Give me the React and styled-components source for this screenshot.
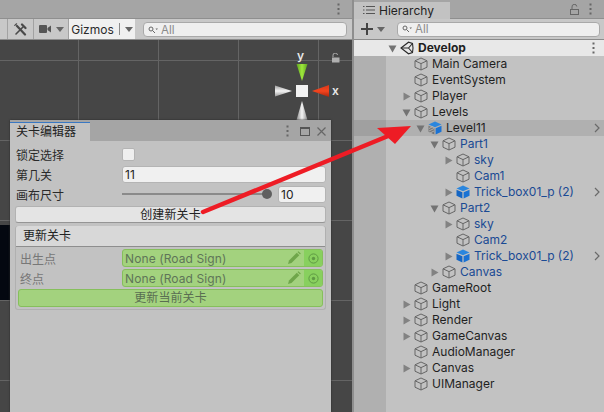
import React from 'react';
import styled, { createGlobalStyle } from 'styled-components';

const GlobalStyle = createGlobalStyle`
  html, body { margin: 0; padding: 0; background: #c2c2c2; }
  * { box-sizing: border-box; }
`;

const uiFont = `Inter, "Noto Sans CJK SC", "Liberation Sans", sans-serif`;

const Page = styled.div`
  position: relative;
  width: 604px;
  height: 412px;
  overflow: hidden;
  display: flex;
  font-family: ${uiFont};
  font-size: 12px;
  color: #1a1a1a;
`;

const ScenePanel = styled.div`
  width: 352px;
  display: flex;
  flex-direction: column;
`;

const TabBar = styled.div`
  height: 19px;
  background: #a5a5a5;
  border-bottom: 1px solid #8f8f8f;
  display: flex;
  align-items: center;
  justify-content: flex-end;
  padding-right: 12px;
`;

const Toolbar = styled.div`
  height: 21px;
  background: #c8c8c8;
  border-bottom: 1px solid #8c8c8c;
  display: flex;
  align-items: stretch;
  padding-left: 7px;
`;

const ToolButton = styled.div`
  width: ${p => p.$w}px;
  display: flex;
  align-items: center;
  justify-content: center;
  gap: 5px;
  border-left: 1px solid #a2a2a2;
  background: ${p => p.$light ? '#f0f0f0' : '#c8c8c8'};
  color: #2a2a2a;
`;

const Divider = styled.span`
  width: 1px;
  height: 12px;
  background: #8a8a8a;
`;

const SearchBox = styled.div`
  height: 15px;
  width: ${p => p.$w}px;
  margin: ${p => p.$margin};
  background: #efefef;
  border: 1px solid #a9a9a9;
  border-radius: 4px;
  display: flex;
  align-items: center;
  gap: 3px;
  padding-left: 4px;
  color: #8a8a8a;
  font-size: 11.5px;
`;

const Scene = styled.div`
  position: relative;
  flex: 1;
  background-color: #464646;
  background-image:
    linear-gradient(#646464 1px, transparent 1px),
    linear-gradient(90deg, #646464 1px, transparent 1px);
  background-size: 80px 80px;
  background-position: 78px 20px;
`;

const BlackImage = styled.div`
  position: absolute;
  left: 0;
  top: 185px;
  width: 12px;
  height: 75px;
  background: #040810;
`;

const GizmoWrap = styled.svg`
  position: absolute;
  left: 268px;
  top: 8px;
`;

const FloatingWindow = styled.div`
  position: absolute;
  left: 10px;
  top: 80px;
  width: 321px;
  height: 292px;
  background: #c2c2c2;
  display: flex;
  flex-direction: column;
  box-shadow: 0 0 2px #2a2a2a;
`;

const WindowBar = styled.div`
  height: 21px;
  background: #a5a5a5;
  display: flex;
  align-items: flex-end;
  justify-content: space-between;
  padding-right: 5px;
`;

const WindowTab = styled.div`
  width: 80px;
  height: 19px;
  background: #c2c2c2;
  border-top: 1px solid #3a78c2;
  padding-left: 6px;
  line-height: 18px;
  color: #222;
`;

const WindowControls = styled.div`
  display: flex;
  align-items: center;
  gap: 7px;
  height: 20px;
`;

const WindowMenu = styled.span`
  display: flex;
  margin-right: 4px;
`;

const WindowBody = styled.div`
  padding: 3px 5px 0;
  display: flex;
  flex-direction: column;
`;

const FieldRow = styled.div`
  display: flex;
  align-items: center;
  height: 20px;
`;

const FieldLabel = styled.div`
  width: ${p => p.$w || 107}px;
  padding-left: ${p => p.$indent ?? 1}px;
  color: ${p => p.$muted ? '#777' : '#2a2a2a'};
`;

const CheckBox = styled.div`
  width: 13px;
  height: 13px;
  background: #efefef;
  border: 1px solid #b4b4b4;
  border-radius: 2px;
`;

const TextInput = styled.div`
  height: 17px;
  width: ${p => p.$w}px;
  background: #f0f0f0;
  border: 1px solid #b4b4b4;
  border-radius: 3px;
  padding-left: 2px;
  line-height: 16px;
  color: #222;
`;

const SliderTrack = styled.div`
  position: relative;
  width: 146px;
  height: 2px;
  margin-right: 10px;
  background: #8a8a8a;
`;

const SliderThumb = styled.div`
  position: absolute;
  right: -4px;
  top: -4px;
  width: 10px;
  height: 10px;
  border-radius: 50%;
  background: #5f5f5f;
`;

const CreateButton = styled.div`
  height: 17px;
  margin-top: 2px;
  background: #e4e4e4;
  border: 1px solid #b2b2b2;
  border-bottom-color: #959595;
  border-radius: 3px;
  text-align: center;
  line-height: 15px;
  letter-spacing: 0.1px;
  color: #222;
`;

const Section = styled.div`
  margin-top: 3px;
  height: 84px;
  border: 1px solid #b0b0b0;
  border-top: none;
  border-radius: 3px;
`;

const SectionHeader = styled.div`
  height: 21px;
  background: #d8d8d8;
  border-bottom: 1px solid #8e8e8e;
  border-radius: 3px 3px 0 0;
  padding-left: 7px;
  line-height: 20px;
  color: #222;
`;

const SectionBody = styled.div`
  padding: 1px 2px 0 2px;
`;

const GreenField = styled.div`
  flex: 1;
  height: 18px;
  background: #a3d27e;
  border: 1px solid #86bf5c;
  border-radius: 3px;
  display: flex;
  align-items: center;
  padding-left: 2px;
  color: #5f7558;
  letter-spacing: 0.1px;
  overflow: hidden;
`;

const FieldText = styled.span`
  flex: 1;
`;

const PickerCell = styled.div`
  width: 18px;
  height: 100%;
  margin-left: 3px;
  background: #88d05e;
  display: flex;
  align-items: center;
  justify-content: center;
`;

const GreenButton = styled.div`
  height: 18px;
  margin-top: 1px;
  background: #a3d27e;
  border: 1px solid #86bf5c;
  border-radius: 3px;
  text-align: center;
  line-height: 16px;
  color: #5a6e52;
  letter-spacing: 0.1px;
`;

const HierarchyPanel = styled.div`
  width: 252px;
  display: flex;
  flex-direction: column;
  border-left: 2px solid #8e8e8e;
`;

const HierarchyBar = styled(TabBar)`
  justify-content: space-between;
  padding-right: 12px;
`;

const HierarchyTab = styled.div`
  width: 96px;
  height: 17px;
  margin-top: 2px;
  background: #c2c2c2;
  display: flex;
  align-items: center;
  gap: 4px;
  padding-left: 9px;
  color: #222;
`;

const BarIcons = styled.div`
  display: flex;
  align-items: center;
  gap: 10px;
`;

const HierarchyToolbar = styled.div`
  height: 21px;
  background: #c8c8c8;
  border-bottom: 1px solid #8c8c8c;
  display: flex;
  align-items: center;
  padding-left: 7px;
`;

const AddButton = styled.div`
  width: 36px;
  display: flex;
  align-items: center;
  gap: 4px;
`;

const Tree = styled.div`
  flex: 1;
  background: linear-gradient(90deg, #b0b0b0 32px, #c2c2c2 32px);
`;

const Row = styled.div`
  position: relative;
  height: 16px;
  display: flex;
  align-items: center;
  padding-left: ${p => 31 + p.$depth * 14}px;
  padding-right: 4px;
  background: ${p => p.$bg || 'transparent'};
  color: ${p => p.$blue ? '#1a4a94' : '#1f1f1f'};
  font-weight: ${p => p.$bold ? 700 : 400};
`;

const RowLabel = styled.span`
  padding-bottom: 2px;
`;

const SelectedStrip = styled.div`
  position: absolute;
  left: 0;
  top: 0;
  width: 32px;
  height: 16px;
  background: #a0a0a0;
`;

const Expander = styled.span`
  position: relative;
  width: 14px;
  height: 16px;
  display: flex;
  align-items: center;
  justify-content: center;
`;

const TreeIcon = styled.span`
  width: 16px;
  height: 16px;
  display: flex;
  align-items: center;
  justify-content: center;
  margin-right: 3px;
`;

const RowEnd = styled.span`
  margin-left: auto;
  margin-right: ${p => p.$inset || 0}px;
  display: flex;
  align-items: center;
`;

const ArrowOverlay = styled.svg`
  position: absolute;
  left: 0;
  top: 0;
  pointer-events: none;
`;

const GizmoLabel = styled.span`
  position: absolute;
  left: ${p => p.$x}px;
  top: ${p => p.$y}px;
  color: #e8e8e8;
  font-size: 12px;
  font-weight: 600;
  font-family: Inter, sans-serif;
`;

const SceneLock = styled.span`
  position: absolute;
  left: 331px;
  top: 13px;
  line-height: 0;
`;

const Dots = ({ color = '#666' }) => (
  <svg width="3" height="12" viewBox="0 0 3 12">
    <rect x="0.5" y="0.5" width="2" height="2" fill={color} />
    <rect x="0.5" y="5" width="2" height="2" fill={color} />
    <rect x="0.5" y="9.5" width="2" height="2" fill={color} />
  </svg>
);

const Triangle = ({ open }) => (
  <svg width="9" height="9" viewBox="0 0 9 9">
    {open
      ? <path d="M0.5 1.5H8.5L4.5 8.5Z" fill="#737373" />
      : <path d="M1.5 0.5V8.5L8.5 4.5Z" fill="#828282" />}
  </svg>
);

const CubeOutline = () => (
  <svg width="14" height="14" viewBox="0 0 14 14" fill="none" stroke="#666" strokeWidth="1" strokeLinejoin="round">
    <path d="M7 1L13 3.8V10.2L7 13L1 10.2V3.8Z" />
    <path d="M1 3.8L7 6.6L13 3.8M7 6.6V13" />
  </svg>
);

const CubePrefab = () => (
  <svg width="14" height="14" viewBox="0 0 14 14">
    <path d="M7 0.5L13.5 3.5L7 6.3L0.5 3.5Z" fill="#2a86de" />
    <path d="M0.5 4.7L6.4 7.3V13.5L0.5 10.7Z" fill="#1566c4" />
    <path d="M13.5 4.7L7.6 7.3V13.5L13.5 10.7Z" fill="#1a72d4" />
  </svg>
);

const CubePrefabHatched = () => (
  <svg width="14" height="14" viewBox="0 0 14 14">
    <path d="M7 0.5L13.5 3.5L7 6.3L0.5 3.5Z" fill="#2a86de" />
    <path d="M0.5 4.7L6.4 7.3V13.5L0.5 10.7Z" fill="#777" />
    <path d="M1 7.5L5 5.5M1 10L6 7.5M2 12L6 10" stroke="#b0b0b0" strokeWidth="1" />
    <path d="M13.5 4.7L7.6 7.3V13.5L13.5 10.7Z" fill="#1a72d4" />
  </svg>
);

const UnityLogo = () => (
  <svg width="14" height="14" viewBox="0 0 14 14" fill="none" stroke="#2a2a2a" strokeWidth="1.1">
    <path d="M1 7L8.5 1.2L12.5 2.5L13 7L12.5 11.5L8.5 12.8Z" />
    <path d="M1 7H8.5L12.5 2.5M8.5 7L12.5 11.5" />
  </svg>
);

const SearchGlyph = () => (
  <svg width="10" height="8" viewBox="0 0 10 8" fill="none" stroke="#666">
    <circle cx="3" cy="3" r="2" />
    <path d="M4.5 4.5L7 7" />
    <path d="M7.5 2.5H10L8.7 4Z" fill="#666" stroke="none" />
  </svg>
);

const Caret = () => (
  <svg width="8" height="5" viewBox="0 0 8 5"><path d="M0 0H8L4 5Z" fill="#666" /></svg>
);

const LockIcon = ({ color = '#666' }) => (
  <svg width="9" height="10" viewBox="0 0 9 10">
    <path d="M2 4V2.5A2 2 0 0 1 6.5 2" fill="none" stroke={color} strokeWidth="1" />
    <rect x="1" y="4.5" width="7.5" height="5" fill={color} />
  </svg>
);

const LockOutline = () => (
  <svg width="9" height="11" viewBox="0 0 9 11" fill="none" stroke="#666">
    <path d="M2 5V3A2.3 2.3 0 0 1 6.8 2.5" />
    <rect x="0.5" y="5.5" width="8" height="5" />
  </svg>
);

const ToolsIcon = () => (
  <svg width="13" height="13" viewBox="0 0 13 13" fill="none" stroke="#4a4a4a" strokeLinecap="round">
    <path d="M3 3L11 11.5" strokeWidth="2.2" />
    <path d="M9 4L2 11" strokeWidth="1.6" />
    <path d="M8 1.5L11.5 5" strokeWidth="2.2" />
    <path d="M0.8 2.4L2.6 0.8" strokeWidth="1.2" />
  </svg>
);

const CameraIcon = () => (
  <svg width="12" height="8" viewBox="0 0 12 8">
    <rect x="0" y="0" width="8" height="8" rx="1" fill="#555" />
    <path d="M8.5 3L12 0.5V7.5L8.5 5Z" fill="#555" />
  </svg>
);

const MaximizeIcon = () => (
  <svg width="10" height="9" viewBox="0 0 10 9" fill="none" stroke="#555">
    <rect x="0.5" y="0.5" width="9" height="8" />
    <path d="M0.5 1.5H9.5" />
  </svg>
);

const CloseIcon = () => (
  <svg width="9" height="9" viewBox="0 0 9 9" fill="none" stroke="#666" strokeWidth="1.2">
    <path d="M0.5 0.5L8.5 8.5M8.5 0.5L0.5 8.5" />
  </svg>
);

const ListIcon = () => (
  <svg width="12" height="10" viewBox="0 0 12 10" fill="none" stroke="#555">
    <path d="M3 1.5H12M3 5H12M3 8.5H12" />
    <path d="M0 1.5H1.5M0 5H1.5M0 8.5H1.5" />
  </svg>
);

const PlusIcon = () => (
  <svg width="12" height="12" viewBox="0 0 12 12">
    <path d="M5 0H7V5H12V7H7V12H5V7H0V5H5Z" fill="#444" />
  </svg>
);

const Pencil = () => (
  <svg width="14" height="14" viewBox="0 0 14 14">
    <path d="M1 13L2 9.5L9.8 1.7L12.3 4.2L4.5 12Z" fill="#6fa64a" />
    <path d="M10.5 1L11.5 0.2L13.8 2.5L13 3.5Z" fill="#6fa64a" />
  </svg>
);

const PickerIcon = () => (
  <svg width="11" height="11" viewBox="0 0 11 11" fill="none" stroke="#5f9a44">
    <circle cx="5.5" cy="5.5" r="4.6" />
    <circle cx="5.5" cy="5.5" r="1.7" fill="#5f9a44" stroke="none" />
  </svg>
);

const Chevron = () => (
  <svg width="6" height="10" viewBox="0 0 6 10" fill="none" stroke="#6a6a6a" strokeWidth="1.2">
    <path d="M1 1L5 5L1 9" />
  </svg>
);

const Gizmo = () => (
  <GizmoWrap width="80" height="72" viewBox="0 0 80 72">
    <defs>
      <linearGradient id="gz-green" x1="0" x2="1" y1="0" y2="0">
        <stop offset="0" stopColor="#5fa31f" />
        <stop offset="0.5" stopColor="#9fe83c" />
        <stop offset="1" stopColor="#5fa31f" />
      </linearGradient>
      <linearGradient id="gz-red" x1="0" x2="0" y1="0" y2="1">
        <stop offset="0" stopColor="#d8381a" />
        <stop offset="0.5" stopColor="#f4451e" />
        <stop offset="1" stopColor="#a8260f" />
      </linearGradient>
      <linearGradient id="gz-white" x1="0" x2="0" y1="0" y2="1">
        <stop offset="0" stopColor="#a0a0a0" />
        <stop offset="0.5" stopColor="#f4f4f4" />
        <stop offset="1" stopColor="#9a9a9a" />
      </linearGradient>
      <linearGradient id="gz-white-v" x1="0" x2="1" y1="0" y2="0">
        <stop offset="0" stopColor="#8e8e8e" />
        <stop offset="0.5" stopColor="#f4f4f4" />
        <stop offset="1" stopColor="#8e8e8e" />
      </linearGradient>
    </defs>
    <path d="M28.5 16H39.5L34 33Z" fill="url(#gz-green)" />
    <path d="M44 43L61 37V49Z" fill="url(#gz-red)" />
    <path d="M7 37.5V48.5L24 43Z" fill="url(#gz-white)" />
    <path d="M28.5 72H39.5L34 53Z" fill="url(#gz-white-v)" />
    <rect x="28" y="37" width="12" height="12" fill="#f2f2f2" />
  </GizmoWrap>
);

const treeRows = [
  { label: 'Develop', depth: 0, open: true, icon: 'unity', bold: true, bg: '#e8e8e8', dots: true },
  { label: 'Main Camera', depth: 1 },
  { label: 'EventSystem', depth: 1 },
  { label: 'Player', depth: 1, closed: true },
  { label: 'Levels', depth: 1, open: true },
  { label: 'Level11', depth: 2, open: true, icon: 'hatched', bg: '#b0b0b0', selected: true, chevron: true },
  { label: 'Part1', depth: 3, open: true, blue: true },
  { label: 'sky', depth: 4, closed: true, blue: true },
  { label: 'Cam1', depth: 4, blue: true },
  { label: 'Trick_box01_p (2)', depth: 4, closed: true, blue: true, icon: 'prefab', chevron: true },
  { label: 'Part2', depth: 3, open: true, blue: true },
  { label: 'sky', depth: 4, closed: true, blue: true },
  { label: 'Cam2', depth: 4, blue: true },
  { label: 'Trick_box01_p (2)', depth: 4, closed: true, blue: true, icon: 'prefab', chevron: true },
  { label: 'Canvas', depth: 3, closed: true, blue: true },
  { label: 'GameRoot', depth: 1 },
  { label: 'Light', depth: 1, closed: true },
  { label: 'Render', depth: 1, closed: true },
  { label: 'GameCanvas', depth: 1, closed: true },
  { label: 'AudioManager', depth: 1 },
  { label: 'Canvas', depth: 1, closed: true },
  { label: 'UIManager', depth: 1 },
];

const rowIcons = {
  unity: <UnityLogo />,
  hatched: <CubePrefabHatched />,
  prefab: <CubePrefab />,
};

const ObjectField = ({ label }) => (
  <FieldRow>
    <FieldLabel $w={104} $indent={2} $muted>{label}</FieldLabel>
    <GreenField>
      <FieldText>None (Road Sign)</FieldText>
      <Pencil />
      <PickerCell><PickerIcon /></PickerCell>
    </GreenField>
  </FieldRow>
);

const App = () => (
  <Page>
    <GlobalStyle />
    <ScenePanel>
      <TabBar><Dots /></TabBar>
      <Toolbar>
        <ToolButton $w={26}><ToolsIcon /></ToolButton>
        <ToolButton $w={35}><CameraIcon /><Caret /></ToolButton>
        <ToolButton $w={67} $light>Gizmos <Divider /><Caret /></ToolButton>
        <SearchBox $w={204} $margin="3px 0 0 8px"><SearchGlyph />All</SearchBox>
      </Toolbar>
      <Scene>
        <BlackImage />
        <Gizmo />
        <GizmoLabel $x={297} $y={8}>y</GizmoLabel>
        <GizmoLabel $x={332} $y={43}>x</GizmoLabel>
        <SceneLock><LockIcon color="#b0b0b0" /></SceneLock>
        <FloatingWindow>
          <WindowBar>
            <WindowTab>关卡编辑器</WindowTab>
            <WindowControls>
              <WindowMenu><Dots /></WindowMenu>
              <MaximizeIcon />
              <CloseIcon />
            </WindowControls>
          </WindowBar>
          <WindowBody>
            <FieldRow>
              <FieldLabel>锁定选择</FieldLabel>
              <CheckBox />
            </FieldRow>
            <FieldRow>
              <FieldLabel>第几关</FieldLabel>
              <TextInput $w={204}>11</TextInput>
            </FieldRow>
            <FieldRow>
              <FieldLabel>画布尺寸</FieldLabel>
              <SliderTrack><SliderThumb /></SliderTrack>
              <TextInput $w={48}>10</TextInput>
            </FieldRow>
            <CreateButton>创建新关卡</CreateButton>
            <Section>
              <SectionHeader>更新关卡</SectionHeader>
              <SectionBody>
                <ObjectField label="出生点" />
                <ObjectField label="终点" />
                <GreenButton>更新当前关卡</GreenButton>
              </SectionBody>
            </Section>
          </WindowBody>
        </FloatingWindow>
      </Scene>
    </ScenePanel>
    <HierarchyPanel>
      <HierarchyBar>
        <HierarchyTab><ListIcon />Hierarchy</HierarchyTab>
        <BarIcons><LockOutline /><Dots /></BarIcons>
      </HierarchyBar>
      <HierarchyToolbar>
        <AddButton><PlusIcon /><Caret /></AddButton>
        <SearchBox $w={203} $margin="0 0 0 0"><SearchGlyph />All</SearchBox>
      </HierarchyToolbar>
      <Tree>
        {treeRows.map((row, i) => (
          <Row key={i} $depth={row.depth} $bg={row.bg} $blue={row.blue} $bold={row.bold}>
            {row.selected && <SelectedStrip />}
            <Expander>
              {row.open && <Triangle open />}
              {row.closed && <Triangle />}
            </Expander>
            <TreeIcon>{rowIcons[row.icon] || <CubeOutline />}</TreeIcon>
            <RowLabel>{row.label}</RowLabel>
            {row.dots && <RowEnd $inset={5}><Dots /></RowEnd>}
            {row.chevron && <RowEnd><Chevron /></RowEnd>}
          </Row>
        ))}
      </Tree>
    </HierarchyPanel>
    <ArrowOverlay width="604" height="412" viewBox="0 0 604 412">
      <path d="M203 212L393 134" stroke="#ee1c25" strokeWidth="4.5" strokeLinecap="round" />
      <path d="M411 126L377 128L395 144Z" fill="#ee1c25" />
    </ArrowOverlay>
  </Page>
);

export default App;
